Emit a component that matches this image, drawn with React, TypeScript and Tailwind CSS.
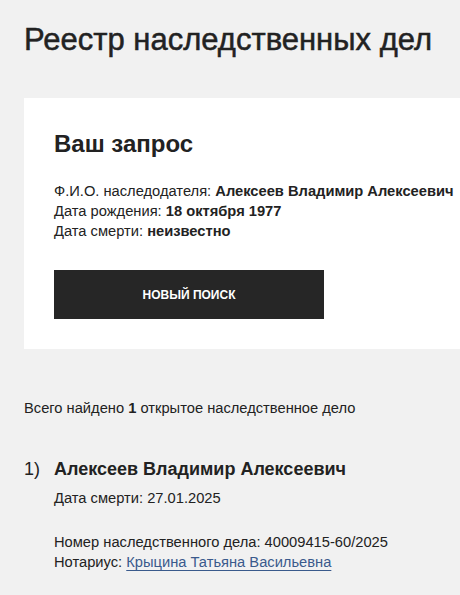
export default function App() {
  return (
    <div className="min-h-[595px] w-[460px] overflow-hidden bg-[#f1f1f1] text-[#222222]" style={{ fontFamily: '"Liberation Sans", Arial, sans-serif' }}>
      <div className="pl-6">
        <h1 className="pt-[22px] text-[31px] leading-[36px] font-normal whitespace-nowrap [-webkit-text-stroke:0.5px_#222222]">Реестр наследственных дел</h1>
        <div className="mt-[40px] w-[460px] bg-white pl-[30px] pt-[31px] pb-[30px]">
          <h2 className="text-[24px] leading-[30px] font-bold">Ваш запрос</h2>
          <div className="mt-[22px] text-[14.7px] leading-[20px] whitespace-nowrap">
            <div>Ф.И.О. наследодателя: <b>Алексеев Владимир Алексеевич</b></div>
            <div>Дата рождения: <b>18 октября 1977</b></div>
            <div>Дата смерти: <b>неизвестно</b></div>
          </div>
          <button className="mt-[29px] flex h-[49px] w-[270px] items-center justify-center bg-[#262626] text-[12px] font-bold text-white uppercase">Новый поиск</button>
        </div>
        <p className="mt-[49px] text-[14.7px] leading-[20px]">Всего найдено <b>1</b> открытое наследственное дело</p>
        <div className="mt-[39px] flex">
          <div className="w-[30px] text-[18px] leading-[24px]">1)</div>
          <div>
            <div className="text-[18px] leading-[24px] font-bold">Алексеев Владимир Алексеевич</div>
            <div className="mt-[7px] text-[14.7px] leading-[20px]">Дата смерти: 27.01.2025</div>
            <div className="mt-[24px] text-[14.7px] leading-[20px]">Номер наследственного дела: 40009415-60/2025</div>
            <div className="text-[14.7px] leading-[20px]">Нотариус: <a href="#" className="text-[#3a5a8c] underline decoration-[#3a5a8c] underline-offset-[3px]">Крыцина Татьяна Васильевна</a></div>
          </div>
        </div>
      </div>
    </div>
  );
}
